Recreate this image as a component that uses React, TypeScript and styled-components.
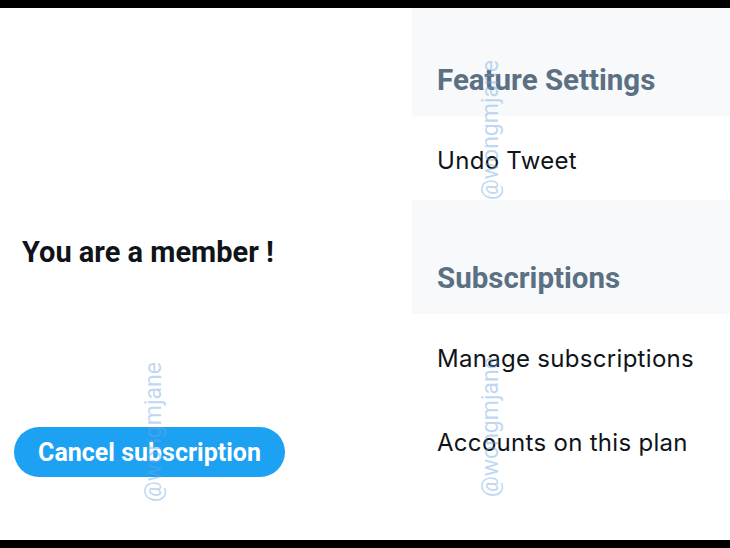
import React from "react"
import styled, { createGlobalStyle } from "styled-components"


const GlobalStyle = createGlobalStyle`
	html, body {
		margin: 0;
		padding: 0;
		background: #000;
	}
	* {
		box-sizing: border-box;
	}
`

const Screen = styled.div`
	width: 730px;
	height: 548px;
	padding: 8px 0;
	background: #000;
	font-family: Roboto, "Liberation Sans", sans-serif;
	overflow: hidden;
`

const Body = styled.div`
	position: relative;
	height: 100%;
	display: flex;
	background: #fff;
`

const MemberPane = styled.div`
	width: 412px;
	display: flex;
	flex-direction: column;
	padding: 224px 0 0 14px;
`

const MemberTitle = styled.h2`
	margin: 0 0 0 8px;
	font-size: 29px;
	font-weight: 700;
	line-height: 40px;
	color: #0f1419;
`

const CancelButton = styled.button`
	margin-top: 155px;
	width: 271px;
	height: 50px;
	border: none;
	border-radius: 25px;
	background: #1da1f2;
	color: #fff;
	font-family: inherit;
	font-size: 25px;
	font-weight: 700;
	padding: 0;
`

const SettingsPane = styled.div`
	flex: 1;
	display: flex;
	flex-direction: column;
`

const SectionHeader = styled.div<{ $height: number }>`
	height: ${p => p.$height}px;
	display: flex;
	align-items: flex-end;
	padding: 0 0 19px 25px;
	background: #f7f9fa;
	color: #5b7083;
	font-size: 29.5px;
	font-weight: 700;
`

const Item = styled.div`
	height: 84px;
	display: flex;
	align-items: center;
	padding: 4px 0 0 25px;
	font-family: Inter, Roboto, sans-serif;
	font-size: 24px;
	letter-spacing: 0.3px;
	color: #0f1419;
`

const Watermark = styled.span<{ $x: number; $y: number }>`
	position: absolute;
	left: ${p => p.$x}px;
	top: ${p => p.$y}px;
	transform: translate(-50%, -50%) rotate(-90deg);
	font-size: 23px;
	color: rgba(110, 165, 225, 0.45);
	white-space: nowrap;
	pointer-events: none;
`

const marks = [
	{ x: 490, y: 122 },
	{ x: 490, y: 419 },
	{ x: 153, y: 424 },
]

export default function App(): JSX.Element
{
	return (
		<Screen>
			<GlobalStyle />
			<Body>
				<MemberPane>
					<MemberTitle>You are a member !</MemberTitle>
					<CancelButton>Cancel subscription</CancelButton>
				</MemberPane>
				<SettingsPane>
					<SectionHeader $height={108}>Feature Settings</SectionHeader>
					<Item>Undo Tweet</Item>
					<SectionHeader $height={114}>Subscriptions</SectionHeader>
					<Item>Manage subscriptions</Item>
					<Item>Accounts on this plan</Item>
				</SettingsPane>
				{marks.map((m, i) => (
					<Watermark key={i} $x={m.x} $y={m.y}>@wongmjane</Watermark>
				))}
			</Body>
		</Screen>
	)
}
